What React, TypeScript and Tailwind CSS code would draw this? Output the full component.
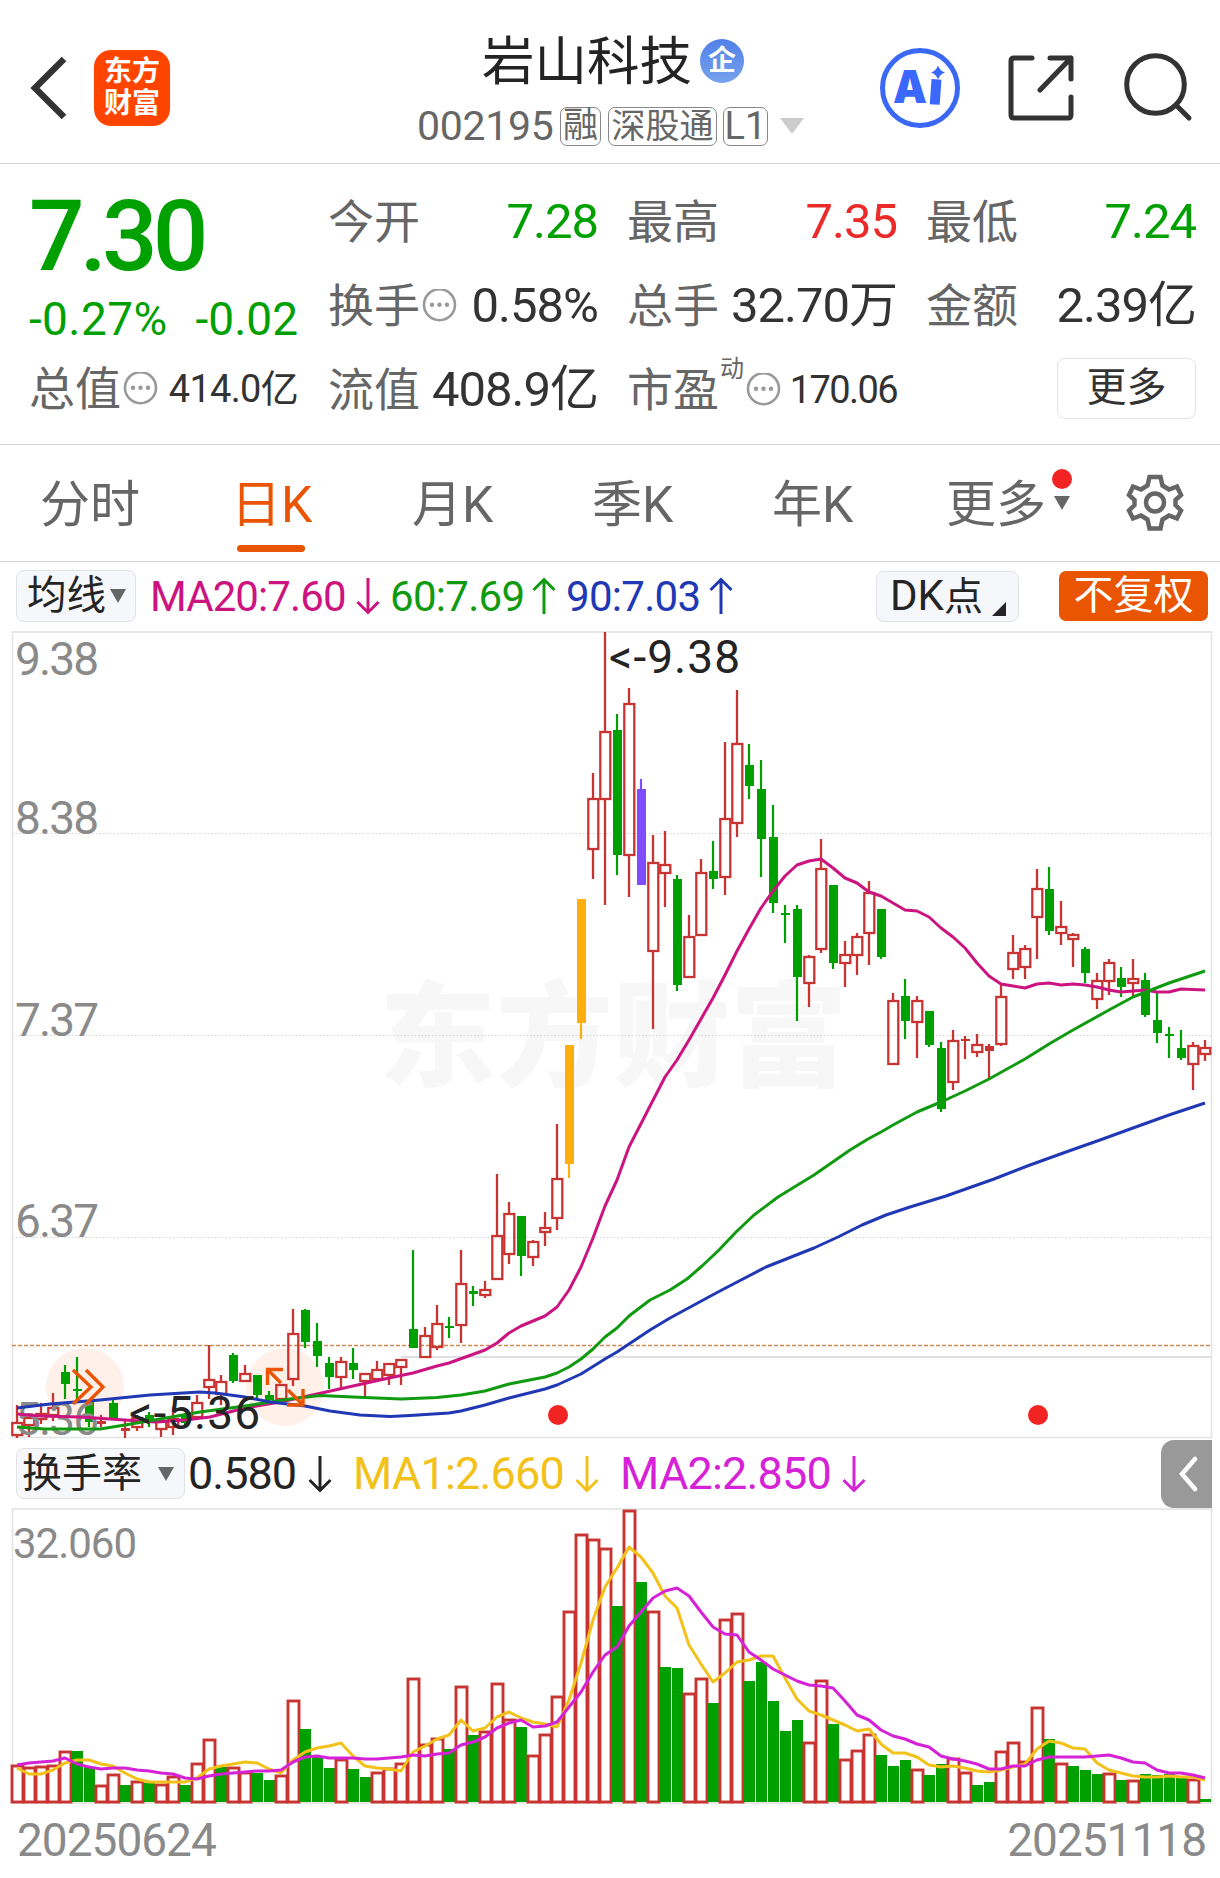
import React from 'react';

type Candle = [string, number, number, number, number];

// kind, high, body top, body bottom, low
const candles: Candle[] = [
  ['r', 1405, 1422, 1436, 1438], ['r', 1413, 1417, 1426, 1437], ['r', 1403, 1413, 1420, 1424], ['r', 1393, 1407, 1416, 1421],
  ['g', 1365, 1372, 1384, 1399], ['g', 1357, 1389, 1391, 1402], ['g', 1400, 1401, 1422, 1427], ['r', 1415, 1421, 1424, 1427],
  ['g', 1398, 1403, 1419, 1419], ['r', 1419, 1428, 1431, 1438], ['r', 1415, 1417, 1428, 1431], ['g', 1412, 1415, 1423, 1427],
  ['r', 1420, 1421, 1430, 1437], ['r', 1407, 1418, 1428, 1435], ['g', 1413, 1415, 1423, 1427], ['r', 1395, 1402, 1418, 1418],
  ['r', 1345, 1379, 1388, 1399], ['r', 1375, 1381, 1395, 1405], ['g', 1353, 1355, 1381, 1383], ['r', 1365, 1373, 1382, 1382],
  ['g', 1375, 1375, 1395, 1398], ['g', 1391, 1395, 1400, 1401], ['r', 1384, 1384, 1400, 1401], ['r', 1309, 1333, 1380, 1386],
  ['g', 1309, 1310, 1342, 1348], ['g', 1323, 1341, 1356, 1367], ['g', 1357, 1363, 1377, 1389], ['r', 1357, 1361, 1378, 1389],
  ['g', 1348, 1363, 1370, 1379], ['r', 1373, 1373, 1382, 1396], ['r', 1361, 1369, 1380, 1382], ['r', 1363, 1363, 1376, 1385],
  ['r', 1359, 1359, 1368, 1385], ['g', 1250, 1329, 1348, 1348], ['r', 1327, 1335, 1358, 1358], ['r', 1305, 1323, 1348, 1350],
  ['g', 1317, 1326, 1328, 1338], ['r', 1250, 1283, 1326, 1343], ['g', 1286, 1291, 1294, 1306], ['r', 1281, 1289, 1296, 1298],
  ['r', 1174, 1235, 1280, 1280], ['r', 1202, 1213, 1255, 1264], ['g', 1216, 1216, 1256, 1276], ['r', 1240, 1241, 1258, 1266],
  ['r', 1212, 1227, 1233, 1246], ['r', 1124, 1178, 1219, 1230], ['o', 1045, 1045, 1164, 1178], ['o', 899, 899, 1023, 1039],
  ['r', 773, 798, 850, 879], ['r', 632, 731, 800, 905], ['g', 714, 730, 855, 875], ['r', 688, 703, 856, 897],
  ['p', 779, 789, 885, 885], ['r', 835, 862, 952, 1029], ['r', 831, 864, 874, 907], ['g', 875, 879, 985, 991],
  ['r', 915, 936, 978, 978], ['r', 859, 872, 936, 936], ['g', 841, 871, 879, 889], ['r', 742, 818, 878, 895],
  ['r', 690, 743, 824, 837], ['g', 744, 765, 786, 799], ['g', 760, 789, 839, 877], ['g', 805, 837, 903, 913],
  ['g', 905, 913, 915, 943], ['g', 905, 909, 977, 1021], ['r', 955, 956, 984, 1007], ['r', 839, 868, 950, 953],
  ['g', 885, 885, 963, 969], ['r', 941, 954, 964, 987], ['r', 933, 936, 956, 975], ['r', 881, 892, 934, 965],
  ['g', 909, 909, 957, 959], ['r', 993, 1000, 1065, 1065], ['g', 979, 996, 1021, 1039], ['r', 996, 1000, 1023, 1058],
  ['g', 1011, 1011, 1045, 1047], ['g', 1042, 1048, 1109, 1112], ['r', 1030, 1040, 1083, 1090], ['r', 1036, 1039, 1041, 1059],
  ['r', 1034, 1044, 1053, 1057], ['r', 1044, 1046, 1051, 1078], ['r', 983, 996, 1045, 1046], ['r', 935, 952, 970, 979],
  ['r', 945, 948, 968, 979], ['r', 869, 888, 918, 959], ['g', 867, 889, 931, 935], ['r', 901, 926, 934, 945],
  ['r', 933, 934, 940, 967], ['g', 947, 949, 973, 983], ['r', 973, 980, 1000, 1009], ['r', 959, 962, 982, 995],
  ['g', 967, 978, 987, 997], ['r', 959, 978, 984, 997], ['g', 973, 980, 1015, 1017], ['g', 993, 1020, 1033, 1043],
  ['g', 1027, 1034, 1036, 1058], ['g', 1030, 1048, 1058, 1060], ['r', 1042, 1045, 1065, 1090], ['r', 1040, 1047, 1055, 1061],
];

const volumeKinds =
  'rrrrrggrrgrgrrgrrgrrggrrgggrggrrrrrrgrgrrrgrrrrrrrgrgrggrrgrrgggggrrgrrrgggrggrrggrrrrgrgggrgrggggrg';

const volumeTops = [
  1765, 1767, 1766, 1765, 1751, 1751, 1767, 1785, 1774, 1785, 1781, 1783, 1784, 1776, 1785, 1763, 1739, 1767, 1767, 1772,
  1773, 1780, 1775, 1700, 1729, 1757, 1768, 1759, 1769, 1777, 1772, 1768, 1763, 1678, 1744, 1738, 1749, 1686, 1735, 1731,
  1683, 1719, 1727, 1755, 1734, 1696, 1611, 1534, 1539, 1548, 1606, 1510, 1582, 1611, 1667, 1668, 1693, 1678, 1703, 1619,
  1613, 1681, 1662, 1701, 1731, 1720, 1742, 1680, 1724, 1759, 1750, 1734, 1755, 1766, 1760, 1769, 1775, 1764, 1758, 1772,
  1785, 1782, 1751, 1742, 1761, 1707, 1739, 1763, 1766, 1770, 1774, 1773, 1780, 1780, 1774, 1775, 1774, 1776, 1779, 1799,
];

const volMa1 = [
  1768, 1774, 1774, 1770, 1763, 1760, 1760, 1764, 1766, 1773, 1779, 1782, 1782, 1782, 1782, 1778, 1769, 1766, 1764, 1762,
  1763, 1769, 1773, 1760, 1752, 1748, 1746, 1743, 1756, 1766, 1768, 1769, 1771, 1752, 1746, 1739, 1735, 1720, 1731, 1728,
  1717, 1712, 1718, 1722, 1724, 1727, 1700, 1663, 1620, 1587, 1568, 1547, 1557, 1573, 1596, 1608, 1645, 1664, 1682, 1673,
  1662, 1660, 1656, 1656, 1678, 1699, 1711, 1715, 1720, 1725, 1731, 1729, 1744, 1753, 1753, 1757, 1765, 1767, 1766, 1768,
  1771, 1772, 1770, 1767, 1764, 1749, 1741, 1743, 1748, 1749, 1763, 1770, 1773, 1776, 1777, 1777, 1776, 1777, 1777, 1780,
];

const volMa2 = [
  1765, 1763, 1762, 1761, 1758, 1764, 1767, 1769, 1768, 1768, 1770, 1771, 1773, 1774, 1778, 1779, 1776, 1774, 1773, 1772,
  1771, 1771, 1770, 1762, 1757, 1756, 1758, 1758, 1758, 1759, 1759, 1758, 1757, 1755, 1756, 1754, 1753, 1745, 1742, 1737,
  1728, 1723, 1720, 1727, 1726, 1722, 1707, 1692, 1672, 1655, 1647, 1626, 1612, 1598, 1591, 1588, 1596, 1612, 1627, 1634,
  1635, 1652, 1660, 1669, 1675, 1681, 1685, 1686, 1688, 1701, 1715, 1720, 1730, 1736, 1739, 1744, 1747, 1756, 1759, 1761,
  1764, 1769, 1769, 1766, 1766, 1760, 1757, 1757, 1757, 1757, 1756, 1755, 1758, 1762, 1763, 1770, 1773, 1773, 1775, 1778,
];

const ma20 =
  '17,1414 41,1416 80,1417 125,1420 155,1422 185,1420 210,1417 245,1408 280,1402 317,1394 353,1386 389,1378 413,1373 437,1366 449,1363 485,1350 497,1343 509,1333 521,1326 533,1321 545,1316 557,1307 569,1290 581,1267 593,1238 605,1206 617,1180 629,1147 648,1110 665,1077 677,1060 689,1040 701,1019 713,998 725,975 737,951 749,929 761,908 773,891 785,876 797,865 809,861 821,859 833,868 845,878 857,883 869,892 881,896 893,903 905,910 917,911 929,917 941,928 953,937 965,948 977,963 989,976 1001,984 1013,986 1025,988 1037,984 1049,983 1061,985 1073,984 1085,985 1097,987 1109,990 1121,992 1133,991 1145,990 1157,992 1169,992 1181,989 1205,990';
const ma60 =
  '17,1427 45,1429 100,1429 125,1425 160,1419 200,1412 245,1406 290,1399 320,1395.5 353,1397 401,1399 437,1397.5 461,1395 485,1391 509,1384 545,1377 557,1373 569,1367 581,1359 593,1349 605,1337 617,1328 629,1316 650,1300 670,1290 687,1279 702,1266 718,1251 736,1232 754,1215 778,1197 814,1175 850,1150 868,1139 881,1132 893,1125 917,1112 941,1102 965,1091 989,1079 1025,1059 1049,1044 1073,1030 1109,1010 1133,997 1169,983 1205,971';
const ma90 =
  '17,1408 50,1404 100,1400 150,1395 200,1392 215,1393 245,1397 270,1402 305,1406 330,1411 360,1415 390,1416.5 410,1415.5 449,1413 461,1411 485,1405 509,1398 545,1389 557,1385 581,1374 605,1359 617,1352 629,1344 650,1330 670,1318 718,1292 766,1267 814,1248 838,1237 862,1225 886,1215 910,1207 946,1196 994,1179 1030,1165 1066,1152 1100,1140 1133,1128 1169,1115 1205,1103';

const cx = (i: number) => 17 + i * 12;

const toPoints = (ys: number[]) => ys.map((y, i) => `${cx(i)},${y}`).join(' ');

const kindColor: Record<string, string> = { r: '#c83432', g: '#00a000', o: '#ffae0d', p: '#7f4dff' };

const CandleMark = ({ c, i }: { c: Candle; i: number }) => {
  const [kind, high, top, bottom, low] = c;
  const x = cx(i);
  const color = kindColor[kind];
  if (kind === 'r' && bottom - top > 5) {
    return (
      <g stroke={color} strokeWidth={2.3} fill="none">
        <path d={`M${x} ${high}V${top}M${x} ${bottom}V${low}`} />
        <rect x={x - 4.7} y={top + 1} width={10} height={bottom - top - 2} />
      </g>
    );
  }
  return (
    <g fill={color}>
      <rect x={x - 1.1} y={high} width={2.2} height={low - high} />
      <rect x={x - 4} y={top} width={9} height={bottom - top} />
    </g>
  );
};

const PriceChart = () => (
  <svg className="block h-[808px] w-[1220px] overflow-visible" viewBox="0 631 1220 808" fontFamily="Roboto, 'Noto Sans CJK SC', sans-serif">
    <text x="379" y="1077" fontSize="114" fontWeight="900" fill="#f7f7f7" textLength="468" lengthAdjust="spacingAndGlyphs">东方财富</text>
    <g stroke="#d4d4d4" strokeWidth={1} strokeDasharray="1.5 2">
      <path d="M12 833.5H1211M12 1035.5H1211M12 1237.5H1211" />
    </g>
    <rect x="12.5" y="632" width="1199" height="805.5" fill="none" stroke="#e3e3e3" strokeWidth={1.6} />
    <path d="M401 1357H1211" stroke="#d3d6db" strokeWidth={1.6} />
    <circle cx="85" cy="1387" r="39" fill="#fff0e9" />
    <circle cx="285" cy="1387" r="39" fill="#fff0e9" />
    <path d="M12 1345.5H1211" stroke="#cf8a58" strokeWidth={1.3} strokeDasharray="4 2" />
    {candles.map((c, i) => <CandleMark key={i} c={c} i={i} />)}
    <g fontSize="46" fill="#8a8a8a">
      <text x="15" y="675" textLength="84">9.38</text>
      <text x="15" y="834" textLength="84">8.38</text>
      <text x="15" y="1036" textLength="84">7.37</text>
      <text x="15" y="1237" textLength="84">6.37</text>
      <text x="15" y="1435" textLength="84">5.36</text>
    </g>
    <g fill="none" strokeWidth={3} strokeLinejoin="round">
      <polyline points={ma20} stroke="#cc1480" />
      <polyline points={ma60} stroke="#109a10" />
      <polyline points={ma90} stroke="#2038b4" />
    </g>
    <g fontSize="46" fill="#242424">
      <text x="609" y="673" textLength="131">&lt;-9.38</text>
      <text x="129" y="1429" textLength="131">&lt;-5.36</text>
    </g>
    <g fill="none" stroke="#ea5504" strokeWidth={3.4}>
      <path d="M73 1370L91 1387L73 1404M86 1370L103 1387L86 1404" />
      <path d="M283 1369.5H267.500V1385M267.500 1369.500L281 1383M287 1405H303V1389M303 1405L288 1390" />
    </g>
    <circle cx="558" cy="1415" r="10" fill="#f12323" />
    <circle cx="1038" cy="1415" r="10" fill="#f12323" />
  </svg>
);

const VolumeChart = () => (
  <svg className="block h-[297px] w-[1220px]" viewBox="0 1508 1220 297" fontFamily="Roboto, sans-serif">
    <rect x="12.5" y="1509" width="1199" height="294" fill="none" stroke="#e3e3e3" strokeWidth={1.6} />
    <text x="13" y="1558" fontSize="42" fill="#8a8a8a" textLength="124">32.060</text>
    {volumeTops.map((top, i) =>
      volumeKinds[i] === 'r' ? (
        <rect key={i} x={cx(i) - 5} y={top + 1} width={11} height={1801 - top} fill="#fff" stroke="#c83432" strokeWidth={2.9} />
      ) : (
        <rect key={i} x={cx(i) - 5} y={top} width={11} height={1802 - top} fill="#00a000" />
      )
    )}
    <g fill="none" strokeWidth={3} strokeLinejoin="round">
      <polyline points={toPoints(volMa1)} stroke="#f2c21a" />
      <polyline points={toPoints(volMa2)} stroke="#d622d6" />
    </g>
  </svg>
);

const MoreDots = () => (
  <svg className="ml-[2px] size-[35px] shrink-0" viewBox="0 0 35 35">
    <circle cx="17.5" cy="15.7" r="15.500" fill="none" stroke="#999" strokeWidth={2.6} />
    <circle cx="10" cy="15.7" r="2.2" fill="#999" />
    <circle cx="17.5" cy="15.7" r="2.2" fill="#999" />
    <circle cx="25" cy="15.7" r="2.2" fill="#999" />
  </svg>
);

const Trend = ({ up = false }: { up?: boolean }) => (
  <svg className={`h-[38px] w-[24px] shrink-0 ${up ? 'rotate-180' : ''}`} viewBox="0 0 24 38" fill="none" stroke="currentColor" strokeWidth={3}>
    <path d="M12 1V35M1.500 25L12 35.500L22.500 25" />
  </svg>
);

const Caret = ({ className }: { className: string }) => (
  <svg className={className} viewBox="0 0 16 14" preserveAspectRatio="none"><path d="M0 0H16L8 14Z" fill="currentColor" /></svg>
);

const Header = () => (
  <header className="flex h-[164px] items-start border-b border-[#d6d6d6]">
    <svg className="mt-[54px] ml-[28px] h-[68px] w-[40px]" viewBox="0 0 40 68" fill="none" stroke="#333" strokeWidth={6.500}>
      <path d="M36 5L7 34L36 63" />
    </svg>
    <div className="mt-[50px] ml-[26px] flex h-[76px] w-[76px] flex-col items-center justify-center rounded-[17px] bg-[#ff4400] text-[28px] leading-[32px] font-bold text-white">
      <span>东方</span>
      <span>财富</span>
    </div>
    <div className="ml-[247px] w-[391px] pt-[26px]">
      <div className="ml-[65px] flex h-[72px] items-center">
        <span className="text-[52.500px] leading-[72px] text-[#242424]">岩山科技</span>
        <span className="mb-[2px] ml-[8px] flex size-[44px] items-center justify-center rounded-full bg-linear-to-b from-[#5080e8] to-[#78a2ec] text-[28px] leading-none font-bold text-white">企</span>
      </div>
      <div className="mt-[8px] flex h-[40px] items-center text-[#666]">
        <span className="w-[143px] text-[41px] leading-[40px] tracking-[-0.3px]">002195</span>
        <span className="flex h-[39px] w-[41px] items-center justify-center rounded-[7px] border border-[#888] text-[35px]">融</span>
        <span className="ml-[7px] flex h-[39px] w-[109px] items-center justify-center rounded-[7px] border border-[#888] text-[34px]">深股通</span>
        <span className="ml-[6px] flex h-[39px] w-[45px] items-center justify-center rounded-[7px] border border-[#888] text-[38px]">L1</span>
        <Caret className="ml-[12px] h-[16px] w-[24px] text-[#ccc]" />
      </div>
    </div>
    <svg className="mt-[47px] ml-[71px] size-[82px]" viewBox="878 47 82 82" fontFamily="Inter, sans-serif">
      <circle cx="919" cy="88" r="37.500" fill="none" stroke="#3a68f5" strokeWidth={5} />
      <g fill="#3a68ff" fontWeight="900" fontSize="46">
        <text x="892" y="103" textLength="34" lengthAdjust="spacingAndGlyphs">A</text>
        <text x="927" y="104.500" textLength="15" lengthAdjust="spacingAndGlyphs" transform="rotate(4 935 95)">ı</text>
        <path d="M937 65.500Q939 71 944 72.500Q939 74 937 79.500Q935 74 930 72.500Q935 71 937 65.500Z" />
      </g>
    </svg>
    <svg className="mt-[52px] ml-[44px] size-[72px]" viewBox="1004 52 72 72" fill="none" stroke="#333" strokeWidth={5} strokeLinecap="round" strokeLinejoin="round">
      <path d="M1031 58H1013Q1010 58 1010 61V115Q1010 118 1013 118H1067Q1070 118 1070 115V97M1049 58H1070V79M1070 58L1039 90" />
    </svg>
    <svg className="mt-[50px] ml-[44px] h-[74px] w-[74px]" viewBox="1120 50 74 74" fill="none" stroke="#333" strokeWidth={5} strokeLinecap="round">
      <circle cx="1154.500" cy="84.500" r="28.800" />
      <path d="M1175 105L1188 118" />
    </svg>
  </header>
);

const Quote = () => (
  <section className="flex h-[281px] border-b border-[#d6d6d6] text-[49px] leading-[84px] text-[#333]">
    <div className="ml-[29px] w-[269px] pt-[2px]">
      <div className="h-[125px] pt-[29px] text-[98px] leading-[84px] font-medium tracking-[-5px] text-[#00a000]">7.30</div>
      <div className="flex h-[56px] justify-between pt-[3px] text-[46px] leading-[50px] text-[#00a000]">
        <span className="tracking-[0.4px]">-0.27%</span>
        <span>-0.02</span>
      </div>
      <div className="flex items-center justify-between">
        <span className="flex items-center text-[46px] text-[#666]">总值<MoreDots /></span>
        <span className="text-[38px] tracking-[-0.700px]">414.0亿</span>
      </div>
    </div>
    <div className="ml-[30px] w-[270px] pt-[16px]">
      <div className="flex h-[84px] justify-between">
        <span className="text-[46px] text-[#666]">今开</span>
        <span className="tracking-[-1px] text-[#00a000]">7.28</span>
      </div>
      <div className="flex h-[84px] items-center justify-between">
        <span className="flex items-center text-[46px] text-[#666]">换手<MoreDots /></span>
        <span className="tracking-[-1px]">0.58%</span>
      </div>
      <div className="flex h-[84px] justify-between">
        <span className="text-[46px] text-[#666]">流值</span>
        <span className="tracking-[-1px]">408.9亿</span>
      </div>
    </div>
    <div className="ml-[29px] w-[270px] pt-[16px]">
      <div className="flex h-[84px] justify-between">
        <span className="text-[46px] text-[#666]">最高</span>
        <span className="tracking-[-1px] text-[#eb2a2a]">7.35</span>
      </div>
      <div className="flex h-[84px] justify-between">
        <span className="text-[46px] text-[#666]">总手</span>
        <span className="tracking-[-1px]">32.70万</span>
      </div>
      <div className="flex h-[84px] items-center justify-between">
        <span className="flex items-center text-[46px] text-[#666]">
          市盈
          <span className="mb-[42px] ml-[1px] text-[24px] leading-none">动</span>
          <MoreDots />
        </span>
        <span className="text-[38px] tracking-[-1.600px]">170.06</span>
      </div>
    </div>
    <div className="ml-[29px] w-[270px] pt-[16px]">
      <div className="flex h-[84px] justify-between">
        <span className="text-[46px] text-[#666]">最低</span>
        <span className="tracking-[-1px] text-[#00a000]">7.24</span>
      </div>
      <div className="flex h-[84px] justify-between">
        <span className="text-[46px] text-[#666]">金额</span>
        <span className="tracking-[-1px]">2.39亿</span>
      </div>
      <div className="flex h-[80px] items-center justify-end">
        <button className="h-[61px] w-[139px] rounded-[8px] border-[1.500px] border-[#e4e4e4] text-[40px] leading-[54px]">更多</button>
      </div>
    </div>
  </section>
);

const Tabs = () => (
  <nav className="flex h-[117px] items-start border-b border-[#d6d6d6] text-[50px] leading-[120px] text-[#666]">
    <span className="ml-[40px] w-[191px]">分时</span>
    <span className="flex w-[181px] flex-col text-[#ea5504]">
      <span className="h-[100px]">日K</span>
      <span className="ml-[6px] h-[7px] w-[68px] rounded-full bg-[#ea5504]" />
    </span>
    <span className="w-[180px]">月K</span>
    <span className="w-[180px]">季K</span>
    <span className="w-[174px]">年K</span>
    <span className="w-[106px]">更多</span>
    <span className="flex w-[20px] flex-col items-center pt-[24px]">
      <span className="size-[20px] rounded-full bg-[#f12323]" />
      <Caret className="mt-[7px] h-[14px] w-[16px]" />
    </span>
    <svg className="mt-[27px] ml-[53px] h-[62px] w-[60px]" viewBox="1125 472 60 62" fill="none" stroke="#666" strokeWidth={4.500}>
      <path d="M1149.500 477H1160.500L1162.500 485.500L1169 489.500L1177 486.500L1181 495L1175.500 500V505L1181 510.500L1177 518.500L1169 515.500L1162.500 519.500L1160.500 528.500H1149.500L1147.500 519.500L1141 515.500L1133 518.500L1129 510.500L1134.500 505V500L1129 495L1133 486.500L1141 489.500L1147.500 485.500Z" />
      <circle cx="1155" cy="502.500" r="9" />
    </svg>
  </nav>
);

const IndicatorBar = () => (
  <div className="flex h-[69px] items-center pb-[1px] pl-[16px] text-[42px]">
    <span className="flex h-[52px] w-[120px] items-center rounded-[8px] border border-[#e0e2e6] bg-[#f6f7fa] pl-[10px] text-[39.500px] leading-[48px] text-[#242424]">
      均线<Caret className="ml-[4px] h-[14px] w-[16px] text-[#666]" />
    </span>
    <span className="ml-[14px] flex w-[240px] items-center text-[#cc1480]"><span className="w-[206px] tracking-[-0.900px]">MA20:7.60</span><Trend /></span>
    <span className="flex w-[176px] items-center text-[#109a10]"><span className="w-[142px] tracking-[-0.700px]">60:7.69</span><Trend up /></span>
    <span className="flex items-center text-[#2038b4]"><span className="w-[143px] tracking-[-0.700px]">90:7.03</span><Trend up /></span>
    <span className="ml-[143px] flex h-[51px] w-[143px] items-center rounded-[8px] border border-[#e0e2e6] bg-[#f6f7fa] pl-[13px] text-[#242424]">
      <span className="leading-[46px]">DK<span className="text-[39px]">点</span></span>
      <svg className="mt-[26px] ml-[9px] size-[14px]" viewBox="0 0 14 14"><path d="M14 0V14H0Z" fill="#242424" /></svg>
    </span>
    <span className="ml-[40px] flex h-[50px] w-[149px] items-center justify-center rounded-[7px] bg-[#ea5504] text-[40px] leading-[46px] text-white">不复权</span>
  </div>
);

const TurnoverBar = () => (
  <div className="flex h-[69px] items-center pl-[16px] text-[45px]">
    <span className="flex h-[51px] w-[169px] items-center rounded-[8px] border border-[#e0e2e6] bg-[#f6f7fa] pl-[5px] text-[40px] leading-[48px] text-[#242424]">
      换手率<Caret className="ml-[16px] h-[14px] w-[16px] text-[#666]" />
    </span>
    <span className="ml-[3px] flex w-[165px] items-center text-[#242424]"><span className="w-[120px] tracking-[-1px]">0.580</span><Trend /></span>
    <span className="flex w-[267px] items-center text-[#f2c21a]"><span className="w-[222px] tracking-[-0.800px]">MA1:2.660</span><Trend /></span>
    <span className="flex w-[541px] items-center text-[#d622d6]"><span className="w-[222px] tracking-[-0.800px]">MA2:2.850</span><Trend /></span>
    <span className="flex h-[68px] w-[51px] items-center justify-center rounded-l-[13px] bg-[#999]">
      <svg className="ml-[2px] h-[38px] w-[20px]" viewBox="0 0 20 38" fill="none" stroke="#fff" strokeWidth={4.500} strokeLinecap="round"><path d="M17 4L4 19L17 34" /></svg>
    </span>
  </div>
);

const App = () => {
  return (
    <div className="h-[1878px] w-[1220px] overflow-hidden bg-white font-[Roboto,'Noto_Sans_CJK_SC',sans-serif] whitespace-nowrap">
      <Header />
      <Quote />
      <Tabs />
      <IndicatorBar />
      <PriceChart />
      <TurnoverBar />
      <VolumeChart />
      <div className="flex justify-between pr-[14px] pl-[17px] text-[46px] leading-[70px] tracking-[-1px] text-[#8a8a8a]">
        <span>20250624</span>
        <span>20251118</span>
      </div>
    </div>
  );
};

export default App;
